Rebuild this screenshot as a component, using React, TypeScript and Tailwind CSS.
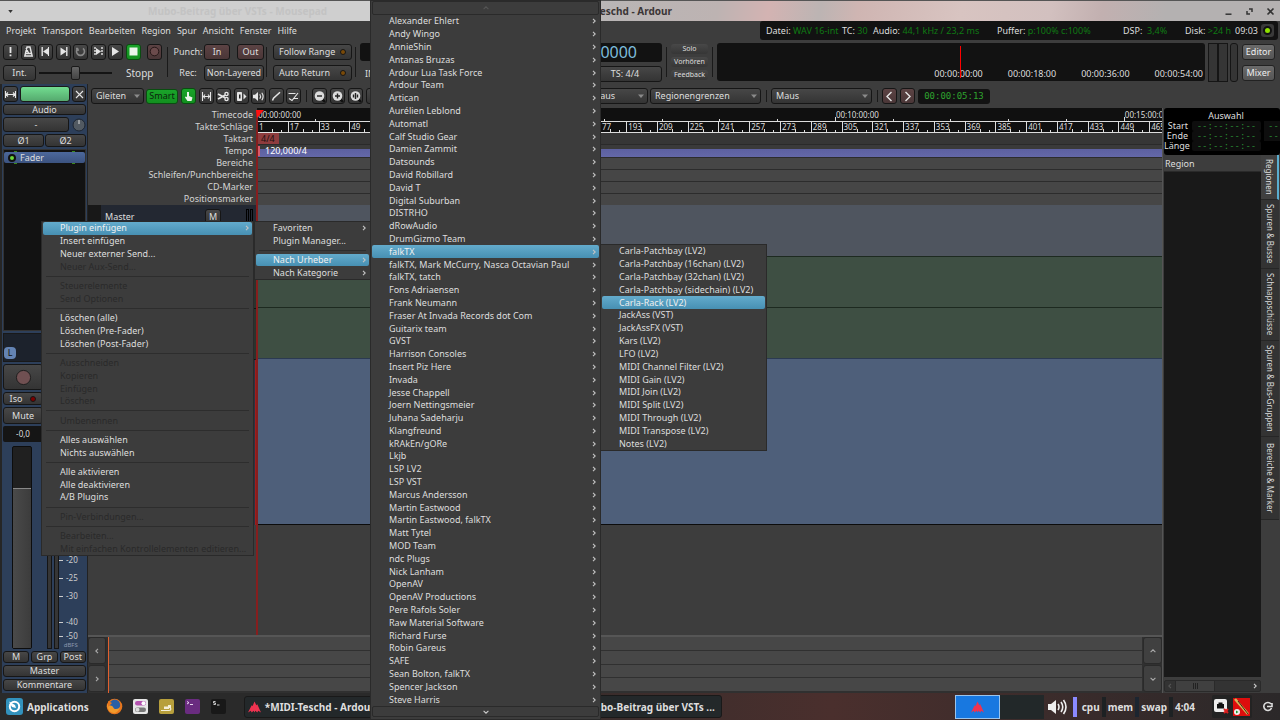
import React from "react";

const authors = [
  "Alexander Ehlert", "Andy Wingo", "AnnieShin", "Antanas Bruzas", "Ardour Lua Task Force", "Ardour Team", "Artican",
  "Aurélien Leblond", "Automatl", "Calf Studio Gear", "Damien Zammit", "Datsounds", "David Robillard", "David T",
  "Digital Suburban", "DISTRHO", "dRowAudio", "DrumGizmo Team", "falkTX", "falkTX, Mark McCurry, Nasca Octavian Paul",
  "falkTX, tatch", "Fons Adriaensen", "Frank Neumann", "Fraser At Invada Records dot Com", "Guitarix team", "GVST",
  "Harrison Consoles", "Insert Piz Here", "Invada", "Jesse Chappell", "Joern Nettingsmeier", "Juhana Sadeharju",
  "Klangfreund", "kRAkEn/gORe", "Lkjb", "LSP LV2", "LSP VST", "Marcus Andersson", "Martin Eastwood",
  "Martin Eastwood, falkTX", "Matt Tytel", "MOD Team", "ndc Plugs", "Nick Lanham", "OpenAV", "OpenAV Productions",
  "Pere Rafols Soler", "Raw Material Software", "Richard Furse", "Robin Gareus", "SAFE", "Sean Bolton, falkTX",
  "Spencer Jackson", "Steve Harris",
];

const plugins = [
  "Carla-Patchbay (LV2)", "Carla-Patchbay (16chan) (LV2)", "Carla-Patchbay (32chan) (LV2)",
  "Carla-Patchbay (sidechain) (LV2)", "Carla-Rack (LV2)", "JackAss (VST)", "JackAssFX (VST)", "Kars (LV2)",
  "LFO (LV2)", "MIDI Channel Filter (LV2)", "MIDI Gain (LV2)", "MIDI Join (LV2)", "MIDI Split (LV2)",
  "MIDI Through (LV2)", "MIDI Transpose (LV2)", "Notes (LV2)",
];

type Entry = { label: string; off?: boolean; sub?: boolean; active?: boolean } | null;

const off = (label: string): Entry => ({ label, off: true });
const on = (label: string): Entry => ({ label });

const processorMenu: Entry[] = [
  { label: "Plugin einfügen", sub: true, active: true }, on("Insert einfügen"), on("Neuer externer Send..."), off("Neuer Aux-Send..."), null,
  off("Steuerelemente"), off("Send Optionen"), null,
  on("Löschen (alle)"), on("Löschen (Pre-Fader)"), on("Löschen (Post-Fader)"), null,
  off("Ausschneiden"), off("Kopieren"), off("Einfügen"), off("Löschen"), null,
  off("Umbenennen"), null,
  on("Alles auswählen"), on("Nichts auswählen"), null,
  on("Alle aktivieren"), on("Alle deaktivieren"), on("A/B Plugins"), null,
  off("Pin-Verbindungen..."), null,
  off("Bearbeiten..."), off("Mit einfachen Kontrollelementen editieren..."),
];

const pluginMenu: Entry[] = [
  { label: "Favoriten", sub: true }, on("Plugin Manager..."), null,
  { label: "Nach Urheber", sub: true, active: true }, { label: "Nach Kategorie", sub: true },
];

function Chevron({ d, className = "" }: { d: string; className?: string }) {
  return (
    <svg viewBox="0 0 6 6" className={`h-[6px] w-[6px] shrink-0 ${className}`} fill="none" stroke="currentColor" strokeWidth="1.1">
      <path d={d} />
    </svg>
  );
}
const RIGHT = "M2 0.8 4.2 3 2 5.2";
const LEFT = "M4 0.8 1.8 3 4 5.2";
const UP = "M0.6 4.2 3 1.8 5.4 4.2";
const DOWN = "M0.6 1.8 3 4.2 5.4 1.8";

function Menu({ entries, className }: { entries: Entry[]; className: string }) {
  return (
    <div role="menu" className={`flex flex-col border-[#2a2a2a] bg-[#3c3c3c] ${className}`}>
      {entries.map((e, i) =>
        e === null ? (
          <div key={i} role="separator" className="flex min-h-0 flex-1 basis-0 items-center px-1">
            <div className="h-px flex-1 bg-[#2d2d2d]" />
          </div>
        ) : (
          <button
            key={i}
            role="menuitem"
            disabled={e.off}
            className={`mx-px flex min-h-0 grow-2 basis-0 items-center justify-between rounded-[2px] pr-[2px] pl-[17px] text-left whitespace-nowrap ${
              e.active ? "bg-linear-to-b from-[#63abcc] to-[#4790b3] text-[#f0f0f0]" : e.off ? "text-[#2a2a2a]" : "text-[#dedede]"
            }`}
          >
            <span>{e.label}</span>
            {e.sub && <Chevron d={RIGHT} className="text-[#c4c4c4]" />}
          </button>
        ),
      )}
    </div>
  );
}

const face = "border border-[#161616] bg-linear-to-b from-[#474747] to-[#343434] text-[#dedede]";

function Btn({ children, className = "", look = face, label }: { children?: React.ReactNode; className?: string; look?: string; label?: string }) {
  return (
    <button aria-label={label} className={`flex shrink-0 items-center justify-center rounded-[3px] whitespace-nowrap ${look} ${className}`}>
      {children}
    </button>
  );
}

const maroon = "border border-[#161616] bg-linear-to-b from-[#5c4344] to-[#4a3637] text-[#dedede]";
const green = "border border-[#0a4d10] bg-linear-to-b from-[#1aa32a] to-[#12901f] text-[#0b250d]";

function Icon({ children }: { children: React.ReactNode }) {
  return (
    <svg viewBox="0 0 15 15" className="h-[15px] w-[15px] shrink-0" fill="none" stroke="#e6e6e6" strokeWidth="1.4">
      {children}
    </svg>
  );
}

function Select({ value, label, className }: { value: string; label: string; className: string }) {
  return (
    <div className={`relative flex h-4 shrink-0 items-center rounded-[3px] ${face} ${className}`}>
      <select aria-label={label} className="h-full w-full appearance-none bg-transparent pl-1 outline-none">
        <option>{value}</option>
      </select>
      <svg viewBox="0 0 6 4" className="pointer-events-none absolute right-[3px] h-1 w-[6px]">
        <path d="M0 0.5h6L3 4z" fill="#8b8b8b" />
      </svg>
    </div>
  );
}

function Sep({ className = "h-[30px]" }: { className?: string }) {
  return <div className={`w-px shrink-0 bg-[#1a1a1a] ${className}`} />;
}

function Led({ className }: { className: string }) {
  return <span className={`h-[6px] w-[6px] rounded-full border border-[#161616] ${className}`} />;
}

function TitleBar() {
  return (
    <header className="relative flex h-[21px] shrink-0 items-center justify-between border-t border-[#555] bg-[linear-gradient(100deg,#cfcfcf_30%,#b9b5b5_48%,#bdb3b2_56%,#d3b3b2_60%,#bcb4b3_64%,#cfb5b2_67%,#d8c4c1_75%,#d2c0bf_82%,#c2b0b0_86%,#b4b1b1_91%)]">
      <div className="flex items-center">
        <svg viewBox="0 0 6 4" className="ml-2 h-[3px] w-[5px]"><path d="M0 0h6L3 4z" fill="#333" /></svg>
        <span className="ml-[135px] text-[10px] font-bold text-[#c3c3c3]">Mubo-Beitrag über VSTs - Mousepad</span>
      </div>
      <h1 className="absolute inset-x-0 mr-[46px] text-center text-[10px] font-bold text-[#3a3536]">*MIDI-Teschd - Ardour</h1>
      <div className="flex items-center gap-3 pr-[5px]">
        <button aria-label="Minimieren"><svg viewBox="0 0 9 9" className="h-[9px] w-[9px]"><path d="M1.5 7.2h6" stroke="#333" strokeWidth="1.5" /></svg></button>
        <button aria-label="Maximieren"><svg viewBox="0 0 9 9" className="h-[9px] w-[9px]" fill="none" stroke="#333" strokeWidth="1.5"><path d="M4 2h3v3M2 4v3h3" /></svg></button>
        <button aria-label="Schließen"><svg viewBox="0 0 9 9" className="h-[9px] w-[9px]" stroke="#333" strokeWidth="1.6"><path d="m1.5 1.5 6 6m0-6-6 6" /></svg></button>
      </div>
    </header>
  );
}

function Stat({ k, v, className }: { k: string; v: string; className: string }) {
  return <span className={`whitespace-nowrap ${className}`}>{k} <span className="text-[#0f7a12]">{v}</span></span>;
}

function MenuBar() {
  return (
    <div className="flex h-[19px] shrink-0 items-center justify-between">
      <nav className="flex gap-[6px] pl-[6px]">
        {["Projekt", "Transport", "Bearbeiten", "Region", "Spur", "Ansicht", "Fenster", "Hilfe"].map((m) => (
          <button key={m}>{m}</button>
        ))}
      </nav>
      <div className="mr-[2px] flex h-[19px] w-[518px] items-center rounded-[3px] bg-[#121212] pr-1 pl-[6px]">
        <Stat k="Datei:" v="WAV 16-int" className="w-[76px]" />
        <Stat k="TC:" v="30" className="w-[31px]" />
        <Stat k="Audio:" v="44,1 kHz / 23,2 ms" className="w-[124px]" />
        <Stat k="Puffer:" v="p:100% c:100%" className="w-[126px]" />
        <Stat k="DSP:" v="&nbsp;3,4%" className="w-[62px]" />
        <Stat k="Disk:" v=">24 h" className="w-[50px]" />
        <span>09:03</span>
        <button aria-label="Fehlerprotokoll" className="ml-auto flex h-[13px] w-[13px] items-center justify-center rounded-[3px] bg-[#3a3a3a]">
          <span className="h-[9px] w-[9px] rounded-full border-2 border-[#111] bg-[#8ee000]" />
        </button>
      </div>
    </div>
  );
}

function TransportIcons() {
  return (
    <div className="flex">
      <div className="flex w-[138px] justify-between">
        <Btn label="Panik" className="h-4 w-[15px]"><Icon><path d="M7.5 3v6M7.5 10.5v1.8" strokeWidth="1.8" /></Icon></Btn>
        <Btn label="Metronom" className="h-4 w-[15px]"><Icon><path d="M6 3h3l2.2 9H3.8zM4.3 9.5h6.4M7.5 9 5 4" /></Icon></Btn>
        <Btn label="Zum Anfang" className="h-4 w-[15px]"><Icon><path d="M4.2 3v9" /><path d="M11 3.5v8L5 7.5z" fill="#e6e6e6" stroke="none" /><path d="M10.5 3v9" strokeWidth="1" /></Icon></Btn>
        <Btn label="Zum Ende" className="h-4 w-[15px]"><Icon><path d="M10.8 3v9" /><path d="M4.5 3.5v8l6-4z" fill="#e6e6e6" stroke="none" /></Icon></Btn>
        <Btn label="Schleife" className="h-4 w-[15px]"><Icon><path d="M5 4.3A4 4 0 1 0 10 4.3M5 4.5V7M5 4.5H3" stroke="#888" strokeWidth="1.6" /></Icon></Btn>
        <Btn label="Auswahl abspielen" className="h-4 w-[15px]"><Icon><path d="M4 3v9M11 3v9" strokeDasharray="2 1" /><path d="M5 4v7l5-3.5z" fill="#e6e6e6" stroke="none" /></Icon></Btn>
        <Btn label="Abspielen" className="h-4 w-[15px]"><Icon><path d="M4 3v9l7-4.5z" fill="#e6e6e6" stroke="none" /></Icon></Btn>
        <Btn label="Stopp" look={green} className="h-4 w-[15px]"><Icon><path d="M3.5 3.5h8v8h-8z" fill="#eaf5ea" stroke="none" /></Icon></Btn>
      </div>
      <Btn label="Aufnahme" look={maroon} className="ml-[6px] h-4 w-[15px]"><Icon><circle cx="7.5" cy="7.5" r="4.3" stroke="#241616" strokeWidth="1" fill="#6b4b4c" /></Icon></Btn>
    </div>
  );
}

function Transport() {
  return (
    <section className="flex h-11 shrink-0 items-center pl-[3px]">
      <div className="flex w-[164px] flex-col gap-[5px]">
        <TransportIcons />
        <div className="flex items-center">
          <Btn className="h-4 w-[33px]">Int.</Btn>
          <div className="relative ml-[3px] flex h-4 w-[73px] items-center">
            <div className="h-[2px] flex-1 bg-[#141414]" />
            <input aria-label="Shuttle" type="range" className="absolute inset-0 w-full opacity-0" />
            <span className="pointer-events-none absolute left-8 h-[14px] w-[9px] rounded-[2px] border border-[#1a1a1a] bg-linear-to-b from-[#666] to-[#444]" />
          </div>
          <span className="ml-[14px] text-[10px]">Stopp</span>
        </div>
      </div>
      <Sep />
      <div className="ml-1 grid w-[94px] grid-cols-[32px_62px] items-center gap-y-[5px]">
        <span className="text-center">Punch:</span>
        <div className="flex justify-between pr-[2px]">
          <Btn look={maroon} className="h-4 w-[26px]">In</Btn>
          <Btn look={maroon} className="h-4 w-[27px]">Out</Btn>
        </div>
        <span className="text-center">Rec:</span>
        <Btn className="h-4 w-[60px]">Non-Layered</Btn>
      </div>
      <Sep />
      <div className="ml-[6px] flex w-[82px] flex-col gap-[5px]">
        {["Follow Range", "Auto Return"].map((t) => (
          <button key={t} className={`flex h-4 w-[79px] items-center justify-between rounded-[3px] px-[5px] whitespace-nowrap ${face}`}>
            {t}<Led className="bg-[#7a4a08]" />
          </button>
        ))}
      </div>
      <Sep />
      <div className="ml-1 flex w-[148px] flex-col gap-[5px]">
        <div className="h-[18px] rounded-[3px] bg-[#121212]" />
        <div className="flex h-4 items-center pl-[5px]">INT/MTC</div>
      </div>
      <div className="ml-1 flex w-[150px] flex-col gap-[4px]">
        <div className="flex h-[19px] items-center justify-end rounded-[3px] bg-[#121212] pr-[25px] text-[16px] text-[#7dbddb]">000|00|0000</div>
        <div className="flex justify-end"><Btn className="h-4 w-[74px]">TS: 4/4</Btn></div>
      </div>
      <div className="ml-1"><Sep /></div>
      <div className="ml-1 flex w-[37px] flex-col gap-[3px] text-[7px]">
        {["Solo", "Vorhören", "Feedback"].map((t) => (
          <Btn key={t} look="bg-linear-to-b from-[#484848] to-[#363636]" className="h-[10px]">{t}</Btn>
        ))}
      </div>
      <div className="ml-1"><Sep /></div>
      <div className="relative ml-1 flex h-[38px] flex-1 flex-col justify-end rounded-[3px] bg-[#121212]">
        <div className="flex justify-end gap-[25px] pr-[2px] pb-px">
          {["00:00:00:00", "00:00:18:00", "00:00:36:00", "00:00:54:00"].map((t) => <span key={t}>{t}</span>)}
        </div>
        <div className="absolute inset-0 flex justify-center py-[3px] pr-px"><span className="w-px bg-[#ff0000]" /></div>
      </div>
      <div className="ml-[3px] flex h-[39px]">
        <div className="w-[10px] border border-[#151515] bg-[#353535]" />
        <div className="w-[10px] border border-[#151515] bg-[#353535]" />
        <div className="ml-[2px] w-2 rounded-[3px] border border-[#151515] bg-[#353535]" />
      </div>
      <div className="mr-[5px] ml-1 flex flex-col gap-[5px]">
        {["Editor", "Mixer"].map((t) => (
          <Btn key={t} look="border border-[#222] bg-linear-to-b from-[#6a6a6a] to-[#555] text-[#eee]" className="h-4 w-[33px]">{t}</Btn>
        ))}
      </div>
    </section>
  );
}

function ToolBar() {
  return (
    <div className="flex h-6 shrink-0 items-center pl-[3px]">
      <Select label="Bearbeitungsmodus" value="Gleiten" className="w-[53px]" />
      <Btn look={green} className="ml-[2px] h-[15px] w-8">Smart</Btn>
      <div className="ml-[3px] flex w-[120px] justify-between">
        <Btn label="Greifen" look={green} className="h-4 w-[15px]"><Icon><path d="M6 3v5L4.5 7.5 4 8.5l2.5 3.5h4l1-3.5L8 7V3z" fill="#eaf5ea" stroke="none" /></Icon></Btn>
        <Btn label="Bereich" className="h-4 w-[15px]"><Icon><path d="M3.5 3v9M11.5 3v9M4 7.5h7M6 5.5 4.5 7.5 6 9.5M9 5.5l1.5 2L9 9.5" strokeWidth="1.1" /></Icon></Btn>
        <Btn label="Schneiden" className="h-4 w-[15px]"><Icon><path d="M2 5 9 8.7M2 10l7-3.7" strokeWidth="1.8" /><circle cx="10.5" cy="5" r="1.6" /><circle cx="10.5" cy="10" r="1.6" /></Icon></Btn>
        <Btn label="Dehnen" className="h-4 w-[15px]"><Icon><path d="M3.5 3.5h4v8h-4z" fill="#e6e6e6" stroke="#e6e6e6" strokeWidth="1" /><path d="M5 5.5h1.5v4H5z" fill="#222" stroke="none" /><path d="M9.5 4.5v6l3-3z" fill="#e6e6e6" stroke="none" /></Icon></Btn>
        <Btn label="Vorhören" className="h-4 w-[15px]"><Icon><path d="M2 5.8h2L7 3v9L4 9.2H2z" fill="#e6e6e6" stroke="none" /><path d="M8.8 5.2q1.6 2.3 0 4.6M10.8 3.8q2.6 3.7 0 7.4" strokeWidth="1.1" /></Icon></Btn>
        <Btn label="Zeichnen" className="h-4 w-[15px]"><Icon><path d="m3.5 11.5 1-2.2 6.5-6" strokeWidth="1.5" /></Icon></Btn>
        <Btn label="Inhalt bearbeiten" className="h-4 w-[15px]"><Icon><path d="M2.5 4.5h7M3 9.5l3 2L12 4M7 9.5h5" strokeWidth="1.2" /></Icon></Btn>
      </div>
      <div className="mr-[5px] ml-[5px]"><Sep className="h-3" /></div>
      <div className="flex gap-[3px]">
        {["M5 7h5", "M5 7h5M7.5 4.5v5", "M7.5 4v6M5.5 5.5v3M9.5 5.5v3"].map((d) => (
          <Btn key={d} label="Zoom" className="h-4 w-[15px]">
            <Icon><path d="m10 10 3 3" stroke="#111" strokeWidth="2.4" /><circle cx="7.5" cy="7" r="4.8" fill="#dcdcdc" stroke="none" /><path d={d} stroke="#222" /></Icon>
          </Btn>
        ))}
      </div>
      <Select label="Zoomfokus" value="Abspielkopf" className="ml-[3px] w-[104px]" />
      <Select label="Raster" value="Kein Raster" className="ml-[3px] w-[106px]" />
      <Select label="Einrasten" value="Maus" className="ml-2 w-[61px]" />
      <Select label="Rasterziel" value="Regionengrenzen" className="ml-[2px] w-[111px]" />
      <div className="mr-1 ml-[5px]"><Sep className="h-3" /></div>
      <Select label="Bearbeitungspunkt" value="Maus" className="w-[101px]" />
      <div className="mr-1 ml-[5px]"><Sep className="h-3" /></div>
      <Btn label="Zurück schieben" look={maroon} className="h-4 w-[15px]"><Icon><path d="M9.5 3 5 7.5 9.5 12" /></Icon></Btn>
      <Btn label="Vor schieben" look={maroon} className="ml-[3px] h-4 w-[15px]"><Icon><path d="M5.5 3 10 7.5 5.5 12" /></Icon></Btn>
      <div className="ml-[3px] flex h-[15px] w-[72px] items-center justify-center rounded-[3px] bg-[#121212] font-['DejaVu_Sans_Mono'] text-[9px] text-[#2ea22e]">00:00:05:13</div>
    </div>
  );
}

const meterMarks = [
  { t: "-20", c: "h-[18px]" }, { t: "-25", c: "h-[18px]" }, { t: "-30", c: "h-[26px]" }, { t: "-40", c: "h-[14px]" }, { t: "-50", c: "h-[9px]" },
];

function MixerStrip() {
  return (
    <aside className="flex w-[88px] shrink-0 flex-col gap-[2px] border-r border-l-2 border-r-[#222] border-l-[#262626] bg-[#2d3f5a] px-px pt-[2px] pb-[2px]">
      <div className="flex h-4 gap-[2px]">
        <Btn label="Breite" className="w-[15px]"><Icon><path d="M2.5 4v7M12.5 4v7M3 7.5h9M5 5.5l-2 2 2 2M10 5.5l2 2-2 2" strokeWidth="1.1" /></Icon></Btn>
        <div className="flex-1 rounded-[3px] border border-[#1a1a1a] bg-linear-to-b from-[#72dd90] to-[#55a96e]" />
        <Btn label="Schließen" className="w-[14px]"><Icon><path d="m4 4 7 7m0-7-7 7" strokeWidth="1.1" /></Icon></Btn>
      </div>
      <Btn className="h-[11px]">Audio</Btn>
      <div className="flex h-[15px] items-center gap-[3px]">
        <Btn className="h-[15px] flex-1">-</Btn>
        <svg viewBox="0 0 14 14" className="h-[14px] w-[14px]"><circle cx="7" cy="7" r="6" fill="#525a62" stroke="#1c2430" /><path d="M7 6V2" stroke="#ddd" /></svg>
      </div>
      <div className="flex h-[13px] gap-px">
        <Btn className="flex-1">Ø1</Btn><Btn className="flex-1">Ø2</Btn>
      </div>
      <div className="h-[182px] shrink-0 border border-[#333] bg-[#121212] pt-px">
        <div className="flex justify-between px-[10px]"><span className="h-px w-[3px] bg-[#3a8a1a]" /><span className="h-px w-[3px] bg-[#3a8a1a]" /></div>
        <button className="flex h-[11px] w-full items-center gap-1 rounded-[2px] bg-linear-to-b from-[#4c689c] to-[#3c5380] pl-[4px]">
          <span className="h-2 w-2 rounded-full border-2 border-[#111] bg-[#6ad83a]" />Fader
        </button>
        <div className="flex justify-between px-[10px]"><span className="h-px w-[3px] bg-[#3a8a1a]" /><span className="h-px w-[3px] bg-[#3a8a1a]" /></div>
      </div>
      <div className="flex h-[29px] shrink-0 items-end border border-[#191919] bg-[#1c222c] pb-[2px]">
        <span className="flex h-3 w-3 items-center justify-center rounded-[4px] bg-[#6484b4] text-[#111]">L</span>
      </div>
      <div className="flex h-[26px] gap-[2px]">
        <Btn label="Aufnahme" className="w-[40px]"><svg viewBox="0 0 18 18" className="h-[17px] w-[17px]"><circle cx="9" cy="9" r="7.5" fill="#705052" stroke="#1c1c1c" /></svg></Btn>
        <Btn className="flex-1">In</Btn>
      </div>
      <div className="flex h-[13px] gap-[2px]">
        <Btn className="w-[40px] gap-2">Iso<Led className="bg-[#7a0000]" /></Btn><Btn className="flex-1">Lock</Btn>
      </div>
      <div className="flex h-[17px] gap-[2px]">
        <Btn className="w-[40px]">Mute</Btn><Btn className="flex-1">Solo</Btn>
      </div>
      <div className="flex h-4 gap-[2px]">
        <div className="flex w-[40px] items-center justify-center rounded-[2px] bg-[#151515] text-[8px]">-0,0</div>
        <div className="flex-1 rounded-[2px] bg-[#151515]" />
      </div>
      <div className="flex min-h-0 flex-1 pt-[2px] pl-[9px]">
        <div className="flex w-5 flex-col rounded-[2px] border border-[#0d0d0d] bg-[#202020]">
          <div className="h-[42px] shrink-0 border-b border-[#888]" />
          <div className="flex-1 bg-linear-to-r from-[#4a4a4a] to-[#3c3c3c]" />
        </div>
        <div className="ml-[15px] w-[5px] border border-[#151515] bg-[#363636]" />
        <div className="ml-[2px] w-[5px] border border-[#151515] bg-[#363636]" />
        <div className="flex flex-col justify-end text-[8px] leading-[8px] text-[#ccc]">
          {meterMarks.map((m) => (
            <div key={m.t} className={`flex items-start ${m.c}`}><span className="mt-1 mr-[3px] h-px w-1 bg-[#ccc]" />{m.t}</div>
          ))}
          <span className="text-right text-[6px] leading-[8px] text-[#8a98ae]">dBFS</span>
        </div>
      </div>
      <div className="flex h-3 gap-[2px]">
        <Btn className="flex-1">M</Btn><Btn className="flex-1">Grp</Btn><Btn className="flex-1">Post</Btn>
      </div>
      <Btn className="h-3">Master</Btn>
      <Btn className="h-3">Kommentare</Btn>
    </aside>
  );
}

const rulers = ["Timecode", "Takte:Schläge", "Taktart", "Tempo", "Bereiche", "Schleifen/Punchbereiche", "CD-Marker", "Positionsmarker"];
const VISIBLE_BEATS = 470.6;
const VISIBLE_MINUTES = 15.66;
const share = (part: number, whole: number) => ({ width: `${(100 * part) / whole}%` });

function Rulers() {
  return (
    <div className="min-w-0 flex-1 overflow-hidden">
      <div className="flex h-[13px] overflow-hidden bg-[#101010] text-[8px] leading-[13px]">
        {[0, 5, 10, 15].map((m) => (
          <div key={m} className="flex shrink-0 items-end" style={share(5, VISIBLE_MINUTES)}>
            {[0, 1, 2, 3, 4].map((k) => (
              <div key={k} className="flex h-full flex-1 basis-0 items-end">
                <span className={k ? "h-[2px] w-px bg-[#ddd]" : "h-[4px] w-px bg-[#ddd]"} />
                {k === 0 && <span className="w-0 whitespace-nowrap">{`00:${String(m).padStart(2, "0")}:00:00`}</span>}
              </div>
            ))}
          </div>
        ))}
      </div>
      <div className="flex h-3 overflow-hidden border-y border-[#ddd] bg-[#101010] text-[8px] leading-[9px]">
        {Array.from({ length: 30 }, (_, i) => (
          <div key={i} className="flex shrink-0 items-end border-l border-[#ddd]" style={share(16, VISIBLE_BEATS)}>
            <span className="flex h-full w-[14px] items-start pl-px">{1 + i * 16}</span>
            <span className="h-[3px] w-px bg-[#ddd]" /><span className="ml-2 h-[2px] w-px bg-[#ddd]" />
          </div>
        ))}
      </div>
      <div className="flex h-3 items-center border-b border-[#2a2a2a] bg-[#363636]">
        <span className="bg-[#8e3c3e] px-1 leading-[11px] text-[#1c1010]">4/4</span>
      </div>
      <div className="flex h-3 items-center bg-linear-to-b from-[#3a3a3a] from-30% via-[#5c60a0] via-31% to-[#6468a8]">
        <span className="h-[10px] w-[3px] bg-[#d85a6a]" />
        <span className="ml-[5px] text-white">120,000/4</span>
      </div>
      {[0, 1, 2, 3].map((i) => <div key={i} className="h-3 border-t border-[#2c2c2c] bg-[#464646]" />)}
    </div>
  );
}

function Canvas() {
  return (
    <main className="relative flex min-w-0 flex-1 flex-col">
      <div className="flex shrink-0">
        <div className="flex w-[169px] flex-col pt-px pr-1 text-right leading-3 text-[#d4d4d4]">
          {rulers.map((r) => <span key={r}>{r}</span>)}
        </div>
        <Rulers />
      </div>
      <div className="flex shrink-0">
        <div className="flex w-[169px] shrink-0 flex-col">
          <div className="flex h-[52px] bg-[#232832]">
            <div className="w-[13px] bg-[#181818]" />
            <span className="mt-[6px] ml-[4px] h-3">Master</span>
            <div className="mt-[4px] mr-[4px] ml-auto flex h-[15px] gap-[25px]">
              <Btn className="w-4">M</Btn>
              <div className="flex gap-px"><span className="w-[3px] border border-black" /><span className="w-[3px] border border-black" /></div>
            </div>
          </div>
          <div className="h-[51px] border-t border-[#111] bg-[#2a332d]" />
          <div className="h-[51px] border-t border-[#111] bg-[#2a332d]" />
          <div className="h-[166px] border-t border-r-2 border-t-[#111] border-r-[#a01c1c] bg-[#2b3442]" />
        </div>
        <div className="flex min-w-0 flex-1 flex-col">
          <div className="h-[51px] bg-[#4f555f]" />
          <div className="h-[51px] border-t border-[#1d2a20] bg-[#3e4f43]" />
          <div className="h-[51px] border-t border-[#1d2a20] bg-[#3e4f43]" />
          <div className="h-[167px] border-t border-b border-t-[#2b3a52] border-b-[#0c0c0c] bg-[#4e5f7a]" />
        </div>
      </div>
      <div className="flex-1" />
      <div className="flex h-[58px] shrink-0 border-t-2 border-[#565656] bg-[#303030]">
        <div className="flex w-[18px] flex-col gap-px pb-px">
          <Btn label="Nach links" look="border border-[#2a2a2a] bg-[#404040] text-[#aaa]" className="flex-1"><Chevron d={LEFT} /></Btn>
          <Btn label="Nach rechts" look="border border-[#2a2a2a] bg-[#404040] text-[#aaa]" className="flex-1"><Chevron d={RIGHT} /></Btn>
        </div>
        <div className="ml-[2px] flex flex-1 flex-col gap-px border-l border-[#e2602e] pb-[2px]">
          {[0, 1, 2, 3].map((i) => <div key={i} className="flex-1 bg-[#474747]" />)}
        </div>
        <div className="ml-px flex w-[19px] flex-col gap-px pb-px">
          <Btn label="Nach oben" look="border border-[#2a2a2a] bg-[#404040] text-[#aaa]" className="flex-1"><Chevron d={UP} /></Btn>
          <Btn label="Nach unten" look="border border-[#2a2a2a] bg-[#404040] text-[#aaa]" className="flex-1"><Chevron d={DOWN} /></Btn>
        </div>
      </div>
      <div className="absolute top-[2px] bottom-[58px] left-[168px] w-[2px] bg-[#861e1e]">
        <svg viewBox="0 0 8 8" className="absolute top-0 left-0 h-2 w-2 max-w-none"><path d="M0 0h8L1 8z" fill="#ff1010" /></svg>
      </div>
    </main>
  );
}

const sideTabs = [
  { t: "Regionen", c: "h-[45px] border-r-2 border-r-[#5aaed0] bg-[#404040]" },
  { t: "Spuren & Busse", c: "h-[69px] bg-[#333]" },
  { t: "Schnappschüsse", c: "h-[72px] bg-[#333]" },
  { t: "Spuren & Bus-Gruppen", c: "h-[96px] bg-[#333]" },
  { t: "Bereiche & Marker", c: "h-[83px] bg-[#333]" },
];

function SideBar() {
  return (
    <aside className="flex w-[118px] shrink-0 flex-col border-l border-[#555] pl-px">
      <div className="h-[47px] shrink-0 overflow-hidden rounded-[3px] bg-black">
        <div className="mt-[3px] pl-2 text-center leading-[10px]">Auswahl</div>
        {["Start", "Ende", "Länge"].map((t) => (
          <div key={t} className="flex h-[10px] items-center gap-[3px] leading-[10px] whitespace-nowrap">
            <span className="w-6 text-right">{t}</span>
            <span className="ml-px w-[69px] shrink-0 rounded-[2px] bg-[#0e0e0e] text-center font-['DejaVu_Sans_Mono'] text-[9px] text-[#2a8a34]">--:--:--:--</span>
            {t !== "Länge" && <span className="flex-1 overflow-hidden bg-[#0e0e0e] pl-1 font-['DejaVu_Sans_Mono'] text-[#2a8a34]">--</span>}
          </div>
        ))}
      </div>
      <div className="flex min-h-0 flex-1">
        <div className="flex flex-1 flex-col">
          <div className="flex h-[17px] items-center border-b border-[#2a2a2a] pt-px pl-px text-[9px]">Region</div>
          <div className="flex-1 bg-[#191919]" />
          <div className="mt-[3px] mb-px flex h-3 rounded-[2px] border border-[#2a2a2a] bg-[#333] text-[#ccc]">
            <button aria-label="Zurück" className="flex w-[10px] items-center justify-center text-[#555]"><Chevron d={LEFT} /></button>
            <div className="flex w-10 items-center justify-center gap-px border-x border-[#2a2a2a] bg-[#404040]">
              <span className="h-[6px] w-px bg-[#222]" /><span className="h-[6px] w-px bg-[#222]" /><span className="h-[6px] w-px bg-[#222]" />
            </div>
            <button aria-label="Weiter" className="ml-auto flex w-[10px] items-center justify-center"><Chevron d={RIGHT} /></button>
          </div>
        </div>
        <div className="flex w-[19px] flex-col pr-px text-[8px]">
          {sideTabs.map((s) => (
            <button key={s.t} className={`flex w-full items-center justify-center border-b border-b-[#262626] whitespace-nowrap text-[#ddd] [writing-mode:vertical-rl] ${s.c}`}>{s.t}</button>
          ))}
        </div>
      </div>
    </aside>
  );
}

function ArdourLogo({ className }: { className: string }) {
  return (
    <svg viewBox="0 0 14 12" className={className}>
      <path d="M7 0 9 4l1-1 4 9-3-2-1 2-2-2-1 2-1-2-2 2-1-2-3 2 4-8 1 1z" fill="#ee3350" />
    </svg>
  );
}

function TaskBar() {
  return (
    <footer className="flex h-[27px] shrink-0 items-center bg-linear-to-r from-[#2a2a2a] from-30% via-[#4a2f2d] via-65% to-[#2b2829] text-[10px] font-bold text-[#dedede]">
      <button className="ml-[6px] flex items-center gap-1 whitespace-nowrap">
        <svg viewBox="0 0 17 17" className="h-[17px] w-[17px]">
          <rect width="17" height="17" rx="3" fill="#3292bd" />
          <circle cx="8.5" cy="8.5" r="4.7" fill="none" stroke="#fff" strokeWidth="2" /><path d="M3 3.5 9 7l1 3-4-1z" fill="#fff" />
        </svg>
        Applications
      </button>
      <div className="ml-[17px] flex items-center gap-[9px]">
        <button aria-label="Firefox"><svg viewBox="0 0 17 17" className="block h-[17px] w-[17px]"><circle cx="8.5" cy="8.5" r="7.8" fill="#e8761c" /><circle cx="8.8" cy="7" r="5.4" fill="#2b5fa6" /><path d="M1 6c1 2 3 1 5 2s1 3 4 3c2 0 3-1 4-2-1 4-4 6-6 6-4 0-7-4-7-9z" fill="#f29a2c" /><path d="m2 3 4 2-4 4z" fill="#e8761c" /></svg></button>
        <button aria-label="Einstellungen"><svg viewBox="0 0 17 17" className="block h-[17px] w-[17px]"><rect x="1" y="1" width="15" height="15" rx="2" fill="#e6e6e6" /><rect x="3" y="3" width="11" height="4.5" rx="2.2" fill="#b453b0" /><rect x="3" y="9.5" width="11" height="4.5" rx="2.2" fill="#777" /><circle cx="11.5" cy="5.2" r="2" fill="#fff" /><circle cx="5.5" cy="11.7" r="2" fill="#ddd" /></svg></button>
        <button aria-label="Jack"><svg viewBox="0 0 17 17" className="block h-[17px] w-[17px]"><rect x="1" y="1" width="15" height="15" rx="2" fill="#b79f3c" /><path d="M3 12.5h8c2.5 0 2.5-3 0-3" fill="none" stroke="#f4eed8" strokeWidth="1.2" /><path d="M6 8.5h5V11H6zM10 7h3v3h-3z" fill="#f4eed8" /></svg></button>
        <button aria-label="Terminal"><svg viewBox="0 0 17 17" className="block h-[17px] w-[17px]"><rect x="1" y="1" width="15" height="15" rx="2" fill="#6a2c80" /><path d="m3 3.5 2 1.2L3 6M6 6.5h3" fill="none" stroke="#e8d8ee" /></svg></button>
        <button aria-label="Konsole"><svg viewBox="0 0 17 17" className="block h-[17px] w-[17px]"><rect x="1" y="1" width="15" height="15" rx="2" fill="#181818" /><path d="M5.5 3.5h-2V5h2v1.5h-2M7 7h2.5" fill="none" stroke="#ccc" /></svg></button>
      </div>
      <div className="ml-[17px] h-[22px] w-[223px] rounded-[3px] border border-[#191919] bg-[#23282a] px-[3px]">
        <button className="flex h-full items-center gap-1 whitespace-nowrap"><ArdourLogo className="h-3 w-[13px]" />*MIDI-Teschd - Ardour</button>
      </div>
      <div className="ml-[3px] flex h-[23px] w-[252px] items-center justify-end rounded-[3px] border border-[#191919] bg-[#23282a] pr-[6px]">
        <button className="whitespace-nowrap">*Mubo-Beitrag über VSTs ...</button>
      </div>
      <div className="ml-auto flex h-6 items-center">
        <button aria-label="Arbeitsfläche 1" className="flex h-6 w-[45px] items-center justify-center border border-[#9ac4ec] bg-[#1878e0]"><ArdourLogo className="h-3 w-[13px]" /></button>
        <div className="h-6 w-11 bg-[#222829]" />
      </div>
      <button aria-label="Lautstärke" className="ml-[3px]">
        <svg viewBox="0 0 20 18" className="block h-[18px] w-5" fill="none" stroke="#eee" strokeWidth="1.6"><path d="M1 6h3l5-4v14l-5-4H1z" fill="#eee" stroke="none" /><path d="M11 6q2 3 0 6M14 4q3.5 5 0 10M16.5 2q5 7 0 14" /></svg>
      </button>
      <span className="ml-[6px] h-5 w-1 bg-[#8a8aff]" />
      <span className="ml-[5px]">cpu</span><span className="mx-[2px] h-5 w-1 bg-[#1d2123]" />
      <span>mem</span><span className="mx-[2px] h-5 w-1 bg-[#1c2530]" />
      <span>swap</span><span className="mx-[2px] h-5 w-1 bg-[#1d2123]" />
      <span>4:04</span>
      <div className="ml-[17px] flex h-[23px] w-[40px] items-center gap-1 rounded-[2px] bg-[#232323] pl-[2px]">
        <svg viewBox="0 0 15 15" className="h-[15px] w-[15px]"><rect width="13" height="13" rx="2" fill="#eee" /><path d="M3 9.5V5h1.5V3.5h4V5H10v4.5z" fill="#111" /><path d="m10 10 4 4m0-4-4 4" stroke="#e02020" strokeWidth="2" /></svg>
        <svg viewBox="0 0 17 18" className="h-[18px] w-[17px]"><rect width="17" height="18" fill="#dd0d0d" /><path d="m2 1 13 15" stroke="#d9b45a" strokeWidth="2.6" /><path d="m5 3 10 13" stroke="#3a2a10" /><circle cx="4" cy="14" r="3" fill="#eee" /><path d="m3 12.5 2.5 1.5L3 15.5z" fill="#1a9a2a" /></svg>
      </div>
      <button aria-label="Abmelden" className="mr-[7px] ml-[10px]">
        <svg viewBox="0 0 11 11" className="block h-[11px] w-[11px]" fill="none" stroke="#ddd" strokeWidth="1.6"><path d="M9 3A4 4 0 1 0 9.5 7M5 5.5h5V2" /></svg>
      </button>
    </footer>
  );
}

function AuthorMenu() {
  return (
    <div className="absolute inset-y-0 left-[370px] flex w-[231px] flex-col border border-[#2a2a2a] bg-[#3c3c3c]">
      <button aria-label="Nach oben blättern" className="mx-px flex h-[14px] shrink-0 items-center justify-center rounded-[2px] border border-[#2a2a2a] text-[#555]"><Chevron d={UP} /></button>
      <Menu
        className="min-h-0 flex-1"
        entries={authors.map((label) => ({ label, sub: true, active: label === "falkTX" }))}
      />
      <button aria-label="Nach unten blättern" className="mx-px mb-[2px] flex h-[11px] shrink-0 items-center justify-center rounded-[2px] border border-[#2a2a2a] text-[#ccc]"><Chevron d={DOWN} /></button>
    </div>
  );
}

export default function App() {
  return (
    <div className="relative flex h-screen min-h-[720px] flex-col overflow-hidden bg-[#3d3d3d] font-['Noto_Sans',sans-serif] text-[9px] leading-[12px] text-[#dedede]">
      <TitleBar />
      <MenuBar />
      <Transport />
      <div className="flex min-h-0 flex-1">
        <MixerStrip />
        <div className="flex min-w-0 flex-1 flex-col">
          <ToolBar />
          <div className="flex min-h-0 flex-1">
            <Canvas />
            <SideBar />
          </div>
        </div>
      </div>
      <TaskBar />
      <Menu entries={processorMenu} className="absolute top-[221px] left-[41px] h-[335px] w-[213px] border" />
      <Menu entries={pluginMenu} className="absolute top-[221px] left-[254px] h-[59px] w-[117px] border" />
      <AuthorMenu />
      <Menu
        className="absolute top-[244px] left-[600px] h-[207px] w-[167px] border"
        entries={plugins.map((label) => ({ label, active: label === "Carla-Rack (LV2)" }))}
      />
    </div>
  );
}
